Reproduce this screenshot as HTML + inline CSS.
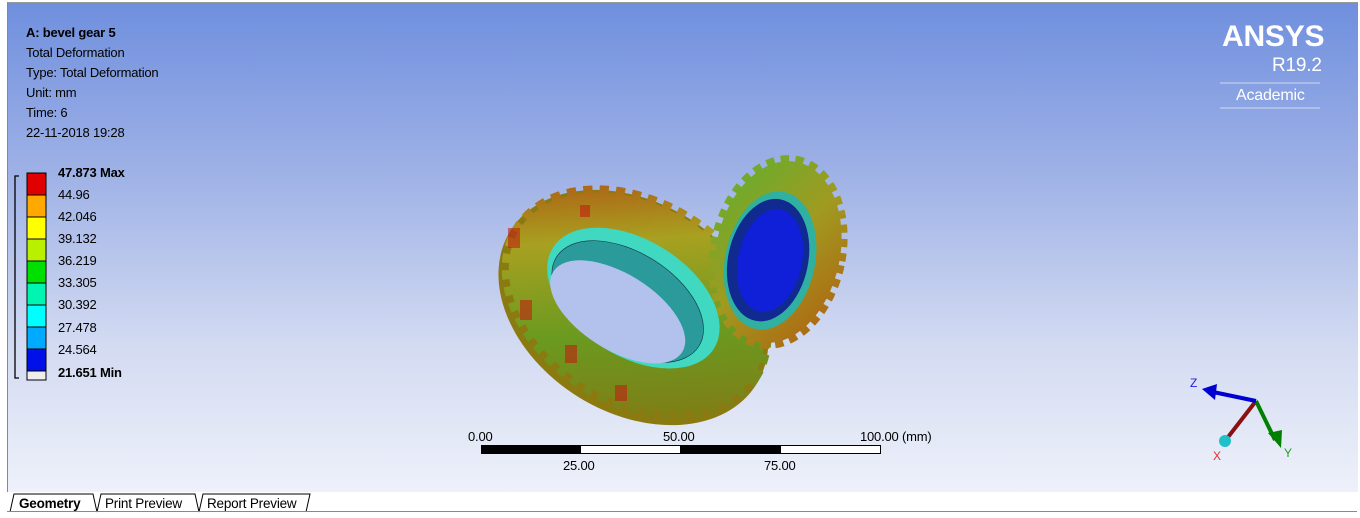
<!DOCTYPE html>
<html><head><style>
body{margin:0;width:1360px;height:518px;overflow:hidden;background:#fff;font-family:"Liberation Sans",sans-serif;position:relative}
#vp{position:absolute;left:7px;top:2px;width:1350px;height:489px;background:linear-gradient(#6f8fde 0%,#9fb2e6 35%,#d3dbf2 70%,#eef1fa 100%);border-top:1px solid #999;border-left:1px solid #888;overflow:hidden}
.t{position:absolute;font-size:13px;color:#000;white-space:nowrap;letter-spacing:-0.2px}
.b{font-weight:bold}
</style></head><body>
<div id="vp"></div>
<div class="t b" style="left:26px;top:25px">A: bevel gear 5</div>
<div class="t" style="left:26px;top:45px">Total Deformation</div>
<div class="t" style="left:26px;top:65px">Type: Total Deformation</div>
<div class="t" style="left:26px;top:85px">Unit: mm</div>
<div class="t" style="left:26px;top:105px">Time: 6</div>
<div class="t" style="left:26px;top:125px">22-11-2018 19:28</div>
<svg style="position:absolute;left:0;top:0" width="1360" height="518">
<defs>
<linearGradient id="g1" x1="0" y1="0" x2="1" y2="1"><stop offset="0" stop-color="#b04010"/><stop offset=".3" stop-color="#a8a020"/><stop offset=".6" stop-color="#6a9a20"/><stop offset="1" stop-color="#8a7010"/></linearGradient>
<linearGradient id="g2" x1="0" y1="0" x2="1" y2="1"><stop offset="0" stop-color="#60b030"/><stop offset=".5" stop-color="#a09a20"/><stop offset="1" stop-color="#b06010"/></linearGradient>
</defs>
<path d="M19 176H15V378H19" fill="none" stroke="#000" stroke-width="1.3"/>
<g stroke="#000" stroke-width="1">
<rect x="27" y="173" width="19" height="22" fill="#e00000"/>
<rect x="27" y="195" width="19" height="22" fill="#ffa800"/>
<rect x="27" y="217" width="19" height="22" fill="#ffff00"/>
<rect x="27" y="239" width="19" height="22" fill="#b8f000"/>
<rect x="27" y="261" width="19" height="22" fill="#00e000"/>
<rect x="27" y="283" width="19" height="22" fill="#00f5b0"/>
<rect x="27" y="305" width="19" height="22" fill="#00ffff"/>
<rect x="27" y="327" width="19" height="22" fill="#00aaff"/>
<rect x="27" y="349" width="19" height="22" fill="#0010e8"/>
<rect x="27" y="371" width="19" height="9" fill="#eee"/>
</g>
<!-- big gear -->
<g transform="rotate(32 635 305)">
<ellipse cx="635" cy="308" rx="145" ry="105" fill="#8a7a10"/>
<ellipse cx="635" cy="302" rx="138" ry="97" fill="url(#g1)" stroke="url(#g1)" stroke-width="14" stroke-dasharray="9 7"/>
<ellipse cx="630" cy="300" rx="95" ry="58" fill="#40d8c0"/>
<ellipse cx="627" cy="306" rx="84" ry="49" fill="#2a9a9a" stroke="#134" stroke-width=".6"/>
<ellipse cx="624" cy="320" rx="76" ry="38" fill="#b3c2ec"/>
</g>
<g fill="#c02010" opacity=".6"><rect x="508" y="228" width="12" height="20"/><rect x="520" y="300" width="12" height="20"/><rect x="565" y="345" width="12" height="18"/><rect x="615" y="385" width="12" height="16"/><rect x="580" y="205" width="10" height="12"/></g>
<!-- small gear -->
<g transform="rotate(12 778 252)">
<ellipse cx="778" cy="252" rx="62" ry="92" fill="url(#g2)" stroke="url(#g2)" stroke-width="12" stroke-dasharray="8 6"/>
<ellipse cx="772" cy="262" rx="45" ry="70" fill="#30b0a0"/>
<ellipse cx="770" cy="262" rx="40" ry="62" fill="#102a90"/>
<ellipse cx="772" cy="262" rx="32" ry="52" fill="#1020d8"/>
</g>
<!-- scale -->
<rect x="481.5" y="445.5" width="399" height="8" fill="#fff" stroke="#000"/>
<rect x="481" y="445" width="100" height="9" fill="#000"/>
<rect x="680" y="445" width="101" height="9" fill="#000"/>
<!-- triad -->
<line x1="1256" y1="401" x2="1225" y2="441" stroke="#8b1010" stroke-width="4"/>
<line x1="1256" y1="401" x2="1275" y2="440" stroke="#008000" stroke-width="4"/>
<path d="M1268 433 L1282 430 L1281 448Z" fill="#008000"/>
<line x1="1256" y1="401" x2="1213" y2="392" stroke="#0000d0" stroke-width="4"/>
<path d="M1202 389 L1217 384 L1215 400Z" fill="#0000d0"/>
<circle cx="1225" cy="441" r="6" fill="#20c0c8"/>
<text x="1190" y="387" fill="#2020e0" font-size="12" font-family="Liberation Sans">Z</text>
<text x="1213" y="460" fill="#e03030" font-size="12" font-family="Liberation Sans">X</text>
<text x="1284" y="457" fill="#20a020" font-size="12" font-family="Liberation Sans">Y</text>
<line x1="1220" y1="83" x2="1320" y2="83" stroke="#fff" opacity=".6"/>
<line x1="1220" y1="108" x2="1320" y2="108" stroke="#fff" opacity=".6"/>
<!-- tabs -->
<path d="M10 512 L14 494 H93 L97 512 M97 512 L101 494 H195 L199 512 M199 512 L203 494 H310 L306 512" fill="none" stroke="#000"/>
</svg>
<div class="t b" style="left:58px;top:165px">47.873 Max</div>
<div class="t" style="left:58px;top:187px">44.96</div>
<div class="t" style="left:58px;top:209px">42.046</div>
<div class="t" style="left:58px;top:231px">39.132</div>
<div class="t" style="left:58px;top:253px">36.219</div>
<div class="t" style="left:58px;top:275px">33.305</div>
<div class="t" style="left:58px;top:297px">30.392</div>
<div class="t" style="left:58px;top:320px">27.478</div>
<div class="t" style="left:58px;top:342px">24.564</div>
<div class="t b" style="left:58px;top:365px">21.651 Min</div>
<div class="t" style="left:1222px;top:20px;font-size:30px;color:#fff;font-weight:bold">ANSYS</div>
<div class="t" style="left:1272px;top:55px;font-size:19px;color:#fff">R19.2</div>
<div class="t" style="left:1236px;top:87px;font-size:16px;color:#fff">Academic</div>
<div class="t" style="left:468px;top:429px">0.00</div>
<div class="t" style="left:663px;top:429px">50.00</div>
<div class="t" style="left:860px;top:429px">100.00 (mm)</div>
<div class="t" style="left:563px;top:458px">25.00</div>
<div class="t" style="left:764px;top:458px">75.00</div>
<div style="position:absolute;left:7px;top:511px;width:1350px;border-top:1px solid #888"></div>
<div class="t b" style="left:19px;top:496px;font-size:13.5px">Geometry</div>
<div class="t" style="left:105px;top:496px;font-size:13.5px">Print Preview</div>
<div class="t" style="left:207px;top:496px;font-size:13.5px">Report Preview</div>
</body></html>
